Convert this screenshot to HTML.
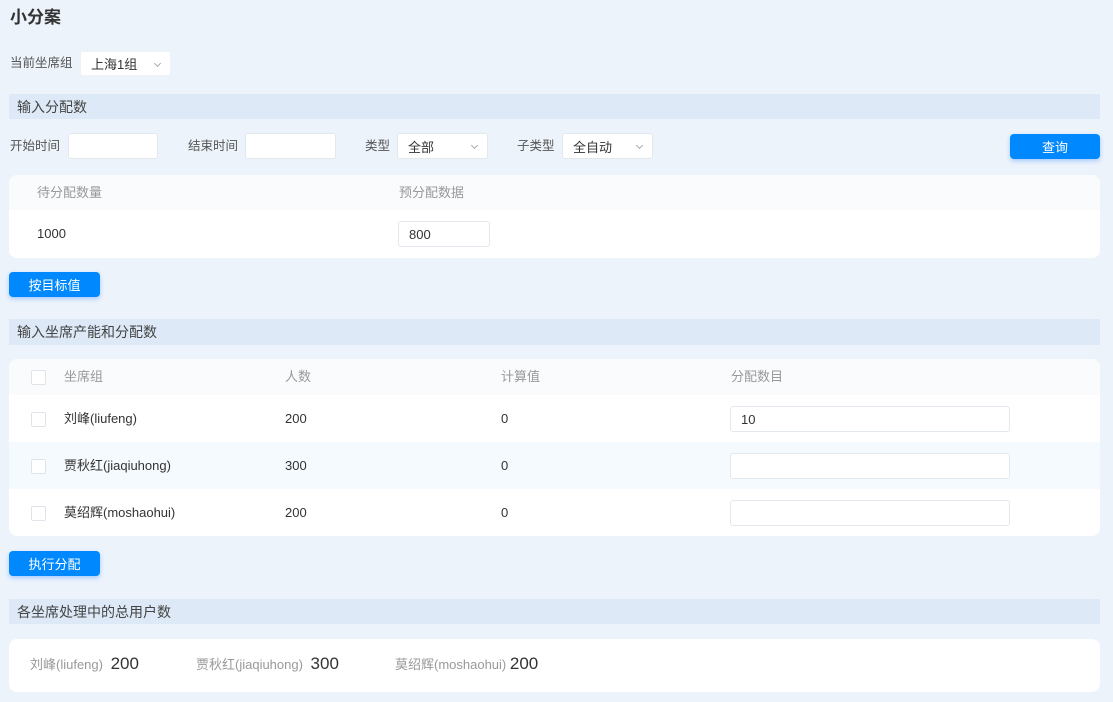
<!DOCTYPE html>
<html><head><meta charset="utf-8"><style>
*{box-sizing:border-box;margin:0;padding:0}
body{width:1113px;height:702px;background:#ecf3fb;font-family:"Liberation Sans","Noto Sans CJK SC",sans-serif;font-size:13px;color:#333;position:relative;overflow:hidden}
.a{position:absolute;white-space:nowrap;line-height:18px}
.lbl{color:#555;font-size:12.5px}
.box{position:absolute;background:#fff;border:1px solid #e3e8ef;border-radius:3px;font-size:13px;color:#333;padding-left:10px;display:flex;align-items:center}
.sel::after{content:"";position:absolute;right:10px;top:9px;width:4px;height:4px;border-right:1px solid #aaa;border-bottom:1px solid #aaa;transform:rotate(45deg)}
.hd{position:absolute;left:9px;width:1091px;background:#dde9f6;font-size:14px;color:#444;padding-left:8px;display:flex;align-items:center}
.btn{position:absolute;background:#0088ff;color:#fff;border-radius:4px;display:flex;align-items:center;justify-content:center;font-size:13px;box-shadow:0 2px 5px rgba(0,110,255,.3)}
.card{position:absolute;left:9px;width:1091px;background:#fff;border-radius:8px;overflow:hidden}
.cb{position:absolute;left:22px;width:15px;height:15px;border:1px solid #dfe3ea;border-radius:2px;background:#fff}
.gh{color:#999}
</style></head><body>
<div class="a" style="left:10px;top:9px;font-size:17px;font-weight:bold;color:#333">小分案</div>
<div class="a lbl" style="left:10px;top:54px">当前坐席组</div>
<div class="box sel" style="left:80px;top:51px;width:91px;height:25px;border-color:#eef1f5">上海1组</div>

<div class="hd" style="top:94px;height:25px">输入分配数</div>
<div class="a lbl" style="left:10px;top:137px">开始时间</div>
<div class="box" style="left:68px;top:133px;width:90px;height:26px"></div>
<div class="a lbl" style="left:188px;top:137px">结束时间</div>
<div class="box" style="left:245px;top:133px;width:91px;height:26px"></div>
<div class="a lbl" style="left:365px;top:137px">类型</div>
<div class="box sel" style="left:397px;top:133px;width:91px;height:26px">全部</div>
<div class="a lbl" style="left:517px;top:137px">子类型</div>
<div class="box sel" style="left:562px;top:133px;width:91px;height:26px">全自动</div>
<div class="btn" style="left:1010px;top:134px;width:90px;height:25px">查询</div>

<div class="card" style="top:175px;height:83px">
<div style="height:35px;background:#f9fbfd"></div>
<div class="a gh" style="left:28px;top:9px">待分配数量</div>
<div class="a gh" style="left:390px;top:9px">预分配数据</div>
<div class="a" style="left:28px;top:50px">1000</div>
<div class="box" style="left:389px;top:46px;width:92px;height:26px">800</div>
</div>
<div class="btn" style="left:9px;top:272px;width:91px;height:25px">按目标值</div>

<div class="hd" style="top:319px;height:26px">输入坐席产能和分配数</div>
<div class="card" style="top:359px;height:177px">
<div style="height:36px;background:#f9fbfd"></div>
<div style="height:47px"></div>
<div style="height:47px;background:#f5fafe"></div>
<div class="cb" style="top:11px"></div>
<div class="a gh" style="left:55px;top:9px">坐席组</div>
<div class="a gh" style="left:276px;top:9px">人数</div>
<div class="a gh" style="left:492px;top:9px">计算值</div>
<div class="a gh" style="left:722px;top:9px">分配数目</div>

<div class="cb" style="top:53px"></div>
<div class="a" style="left:55px;top:51px">刘峰(liufeng)</div>
<div class="a" style="left:276px;top:51px">200</div>
<div class="a" style="left:492px;top:51px">0</div>
<div class="box" style="left:721px;top:47px;width:280px;height:26px">10</div>

<div class="cb" style="top:100px"></div>
<div class="a" style="left:55px;top:98px">贾秋红(jiaqiuhong)</div>
<div class="a" style="left:276px;top:98px">300</div>
<div class="a" style="left:492px;top:98px">0</div>
<div class="box" style="left:721px;top:94px;width:280px;height:26px"></div>

<div class="cb" style="top:147px"></div>
<div class="a" style="left:55px;top:145px">莫绍辉(moshaohui)</div>
<div class="a" style="left:276px;top:145px">200</div>
<div class="a" style="left:492px;top:145px">0</div>
<div class="box" style="left:721px;top:141px;width:280px;height:26px"></div>
</div>
<div class="btn" style="left:9px;top:551px;width:91px;height:25px">执行分配</div>

<div class="hd" style="top:599px;height:25px">各坐席处理中的总用户数</div>
<div class="card" style="top:639px;height:53px">
<div class="a" style="left:21px;top:16px;font-size:13px;color:#999">刘峰(liufeng) <span style="font-size:17px;color:#333;margin-left:4px">200</span></div>
<div class="a" style="left:187px;top:16px;font-size:13px;color:#999">贾秋红(jiaqiuhong) <span style="font-size:17px;color:#333;margin-left:4px">300</span></div>
<div class="a" style="left:386px;top:16px;font-size:13px;color:#999">莫绍辉(moshaohui) <span style="font-size:17px;color:#333">200</span></div>
</div>
</body></html>
